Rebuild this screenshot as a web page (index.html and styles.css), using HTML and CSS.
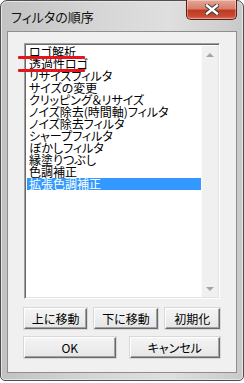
FILE: index.html
```html
<!DOCTYPE html>
<html lang="ja">
<head>
  <meta charset="UTF-8" />
  <title>フィルタの順序</title>
  <link rel="stylesheet" href="styles.css">
</head>
<body>
  <div class="window">
    <div class="titlebar">
      <div class="title">フィルタの順序</div>
      <div class="close-btn">
        <svg width="14" height="11" viewBox="0 0 14 11">
          <path d="M2 1.5 L12 9.5 M12 1.5 L2 9.5" stroke="#3a3a3a" stroke-width="4.4" stroke-linecap="square" />
          <path d="M2 1.5 L12 9.5 M12 1.5 L2 9.5" stroke="#fff" stroke-width="2.4" stroke-linecap="square" />
        </svg>
      </div>
    </div>

    <div class="client">
      <div class="listbox">
        <ul class="items">
          <li>ロゴ解析</li>
          <li>透過性ロゴ</li>
          <li>リサイズフィルタ</li>
          <li>サイズの変更</li>
          <li>クリッピング＆リサイズ</li>
          <li>ノイズ除去(時間軸)フィルタ</li>
          <li>ノイズ除去フィルタ</li>
          <li>シャープフィルタ</li>
          <li>ぼかしフィルタ</li>
          <li>縁塗りつぶし</li>
          <li>色調補正</li>
          <li class="selected">拡張色調補正</li>
        </ul>
        <div class="scrollbar">
          <span class="arrow up"></span>
          <span class="arrow down"></span>
        </div>
      </div>

      <div class="btn-row">
        <button class="btn w64">上に移動</button>
        <button class="btn w64">下に移動</button>
        <button class="btn w56">初期化</button>
      </div>
      <div class="btn-row wide">
        <button class="btn w92">OK</button>
        <button class="btn w91">キャンセル</button>
      </div>
    </div>

    <!-- hand-drawn red marks -->
    <div class="mark mark1"></div>
    <div class="mark mark2"></div>
  </div>
</body>
</html>
```

FILE: styles.css
```css
body { margin: 0; background: #fff; font-family: "Noto Sans CJK JP", sans-serif; }

.window {
  position: relative;
  width: 244px;
  height: 381px;
  box-sizing: border-box;
  border: 1px solid #4e4e4e;
  border-radius: 7px 7px 5px 5px;
  background: linear-gradient(to right, #c2c2c2, #d6d6d6 40%, #dfdfdf 70%, #c9c9c9);
  box-shadow: inset 0 0 0 1px #e6e6e6;
  padding: 0 6px;
}

.titlebar {
  height: 30px;
  display: flex;
  align-items: center;
}

.title {
  font-size: 13px;
  color: #111;
  padding-left: 4px;
  padding-top: 1px;
  font-feature-settings: "palt";
}

.close-btn {
  position: absolute;
  top: -1px;
  right: 6px;
  width: 49px;
  height: 19px;
  border: 1px solid #5a1d12;
  border-top: none;
  border-radius: 0 0 5px 5px;
  background: linear-gradient(#e7a596 0%, #d7806c 45%, #c03a22 55%, #c84a30 85%, #d9755a 100%);
  box-shadow: inset 0 0 0 1px rgba(255,255,255,0.35);
  display: flex;
  align-items: center;
  justify-content: center;
}

.client {
  height: 342px;
  box-sizing: border-box;
  background: #f0f0f0;
  border: 1px solid #8e8e8e;
  padding: 11px 16px 0;
}

.listbox {
  width: 196px;
  height: 256px;
  box-sizing: border-box;
  display: flex;
  background: #fff;
  border-top: 1px solid #a0a0a0;
  border-left: 1px solid #a0a0a0;
  border-right: 1px solid #fff;
  border-bottom: 1px solid #fff;
  box-shadow: inset 1px 1px 0 #696969, inset -1px -1px 0 #e3e3e3;
  padding: 2px 1px 1px 2px;
}

.items {
  flex: 1;
  list-style: none;
  margin: 0;
  padding: 0;
  font-size: 12px;
  line-height: 12px;
  color: #000;
  font-feature-settings: "palt";
}

.items li {
  height: 12px;
  padding-left: 2px;
  white-space: nowrap;
}

.items li.selected { background: #3399ff; color: #fff; }

.scrollbar {
  width: 16px;
  background: #f0f0f0;
  border-left: 1px solid #fbfbfb;
  display: flex;
  flex-direction: column;
  justify-content: space-between;
  align-items: center;
  padding: 7px 0 6px;
}

.arrow { width: 0; height: 0; border-left: 4px solid transparent; border-right: 4px solid transparent; }
.arrow.up { border-bottom: 4px solid #a5a5a5; }
.arrow.down { border-top: 4px solid #a5a5a5; }

.btn-row {
  display: flex;
  gap: 7px;
  margin-top: 9px;
}

.btn-row.wide { gap: 14px; margin-top: 8px; }

.btn {
  height: 21px;
  padding: 0;
  font-family: "Noto Sans CJK JP", sans-serif;
  font-size: 12px;
  color: #000;
  background: linear-gradient(#f4f4f4, #e6e6e6);
  border-top: 1px solid #fff;
  border-left: 1px solid #fff;
  border-right: 1px solid #696969;
  border-bottom: 1px solid #696969;
  box-shadow: inset -1px -1px 0 #a0a0a0, 0 0 0 1px #d8d8d8;
  font-feature-settings: "palt";
}

.w64 { width: 64px; }
.w56 { width: 56px; }
.w92 { width: 92px; }
.w91 { width: 91px; }

.mark {
  position: absolute;
  left: 17px;
  width: 67px;
  height: 3px;
  background: #e8141c;
  border-radius: 1px;
}

.mark1 { top: 55px; }
.mark2 { top: 68px; }
```
